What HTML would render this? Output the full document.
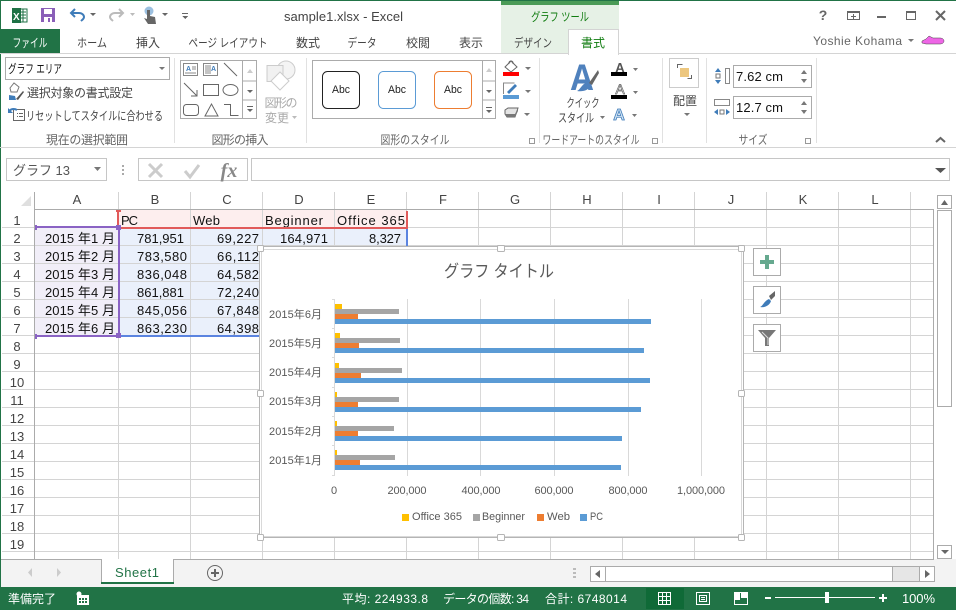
<!DOCTYPE html>
<html lang="ja"><head><meta charset="utf-8"><title>sample1.xlsx - Excel</title>
<style>
html,body{margin:0;padding:0;background:#fff;width:956px;height:610px;overflow:hidden}
svg{display:block;position:absolute;left:0;top:0}
text{font-family:"Liberation Sans","Noto Sans CJK JP",sans-serif;fill:#444}
.c{shape-rendering:crispEdges}
.m{text-anchor:middle}
.r{font-size:12px}
.g{font-size:12px;fill:#666}
.cell{font-size:13px;fill:#111}
.h{font-size:13px;fill:#444}
.a{font-size:11px;fill:#595959}
.s{font-size:12px;fill:#fff}
</style></head><body>
<svg width="956" height="610" viewBox="0 0 956 610">
<rect class="c" width="956" height="610" fill="#fff"/>
<!-- window edges -->
<rect class="c" width="956" height="1" fill="#217346"/>
<rect class="c" x="0" width="1" height="610" fill="#217346"/>

<!-- QAT -->
<rect class="c" x="18" y="9" width="9" height="13" fill="#fff" stroke="#1e7145"/>
<path class="c" d="M20 12h6M20 15h6M20 18h6M23 9v13" stroke="#1e7145" fill="none"/>
<rect class="c" x="12" y="8" width="9" height="15" fill="#1e7145"/>
<text x="13" y="20" style="font-size:10px;font-weight:bold;fill:#fff">X</text>
<rect class="c" x="41" y="8" width="14" height="14" fill="#8a5fb8"/>
<rect class="c" x="44" y="9" width="8" height="5" fill="#fff"/>
<rect class="c" x="44" y="17" width="8" height="5" fill="#fff"/>
<rect class="c" x="48" y="18" width="2" height="4" fill="#8a5fb8"/>
<path d="M75 9l-4 4 4 4M71 13h8c3 0 5 2 5 4s-2 3-3 4" fill="none" stroke="#3f7cb9" stroke-width="2"/>
<path d="M90 13h6l-3 3z" fill="#666"/>
<path d="M119 9l4 4-4 4M123 13h-8c-3 0-5 2-5 4s2 3 3 4" fill="none" stroke="#bbb" stroke-width="2"/>
<path d="M130 13h5l-2.500 3z" fill="#bbb"/>
<circle cx="149" cy="11" r="4.500" fill="#9cc0e0"/>
<path d="M147 10h3v6l5 1 1 7h-8l-4-6 3 1z" fill="#666"/>
<path d="M162 13h6l-3 3z" fill="#666"/>
<path class="c" d="M182 13h6v1h-6zM182 16h6l-3 3z" fill="#666"/>

<text x="343.500" y="21" class="m" style="font-size:13px;fill:#444" textLength="119">sample1.xlsx - Excel</text>

<!-- window buttons -->
<text x="823" y="20" class="m" style="font-size:14px;font-weight:bold;fill:#666">?</text>
<rect class="c" x="847.500" y="11.500" width="12" height="8" fill="#fff" stroke="#666"/>
<path class="c" d="M847 11h13v2h-13zM853 14h1v5h-1zM851 16h5v1h-5z" fill="#666"/>
<rect class="c" x="877" y="16" width="9" height="2" fill="#666"/>
<rect class="c" x="906.500" y="11.500" width="9" height="8" fill="#fff" stroke="#666"/>
<rect class="c" x="906" y="11" width="10" height="2" fill="#666"/>
<path d="M936 11l9 9M945 11l-9 9" stroke="#666" stroke-width="2"/>

<!-- contextual tab -->
<rect class="c" x="501" y="1" width="118" height="52" fill="#e6f1e6"/>
<rect class="c" x="501" y="1" width="118" height="4" fill="#4b9b57"/>
<text x="560" y="21" class="m" style="font-size:12px;fill:#107c10" textLength="58" lengthAdjust="spacingAndGlyphs">グラフ ツール</text>

<!-- tabs -->
<rect class="c" x="1" y="29" width="59" height="25" fill="#217346"/>
<rect class="c" x="0" y="53" width="956" height="1" fill="#d4d4d4"/>
<rect class="c" x="568.500" y="29.500" width="50" height="25" fill="#fff" stroke="#d4d4d4"/>
<rect class="c" x="569" y="53" width="49" height="2" fill="#fff"/>
<text x="30" y="47" class="m" style="font-size:12px;fill:#fff" textLength="35" lengthAdjust="spacingAndGlyphs">ファイル</text>
<text x="92" y="47" class="m r" textLength="30" lengthAdjust="spacingAndGlyphs">ホーム</text>
<text x="148" y="47" class="m r" textLength="24">挿入</text>
<text x="228" y="47" class="m r" textLength="79" lengthAdjust="spacingAndGlyphs">ページ レイアウト</text>
<text x="308" y="47" class="m r" textLength="24">数式</text>
<text x="362" y="47" class="m r" textLength="29" lengthAdjust="spacingAndGlyphs">データ</text>
<text x="418" y="47" class="m r" textLength="24">校閲</text>
<text x="471" y="47" class="m r" textLength="24">表示</text>
<text x="533" y="47" class="m r" textLength="38" lengthAdjust="spacingAndGlyphs">デザイン</text>
<text x="593" y="47" class="m" style="font-size:12px;fill:#107c10" textLength="24">書式</text>

<text x="813" y="45" style="font-size:12px;fill:#666" textLength="89">Yoshie Kohama</text>
<path d="M908 39h6l-3 3z" fill="#777"/>
<path d="M922 41l4-2 3-3 4 2h7c3 0 4 2 4 3s-1 3-4 3h-14l-4-1z" fill="#ee66e6" stroke="#444" stroke-width=".5"/>

<!-- ribbon bottom -->
<rect class="c" x="0" y="147" width="956" height="1" fill="#d4d4d4"/>
<!-- separators -->
<path class="c" d="M174.500 58v85M306.500 58v85M539.500 58v85M662.500 58v85M706.500 58v85M816.500 58v85" stroke="#e1e1e1"/>

<!-- Group 1 -->
<rect class="c" x="5.500" y="57.500" width="164" height="22" fill="#fff" stroke="#ababab"/>
<text x="8" y="73" style="font-size:12px;fill:#111" textLength="54" lengthAdjust="spacingAndGlyphs">グラフ エリア</text>
<path d="M159 67h6l-3 3z" fill="#777"/>
<path d="M10 88l4-5 5 4-2 5h-6z" fill="#fff" stroke="#777"/>
<path d="M16 99l7-8 1 1-6 8z" fill="#555"/>
<path d="M9 95l6 1 1 4-7 0z" fill="#3f7cb9"/>
<text x="27" y="97" class="r" textLength="106">選択対象の書式設定</text>
<rect class="c" x="13.500" y="109.500" width="11" height="11" fill="#fff" stroke="#666"/>
<path class="c" d="M17 113h1v1h-1zM19 113h4v1h-4zM17 116h1v1h-1zM19 116h4v1h-4z" fill="#666"/>
<path d="M9 112c1-3 5-4 8-2" fill="none" stroke="#3f7cb9" stroke-width="2"/>
<path d="M8 108v5h5z" fill="#3f7cb9"/>
<text x="26" y="120" class="r" textLength="137" lengthAdjust="spacingAndGlyphs">リセットしてスタイルに合わせる</text>
<text x="87" y="144" class="g m" textLength="82">現在の選択範囲</text>

<!-- Shapes gallery -->
<rect class="c" x="180.500" y="60.500" width="76" height="58" fill="#fff" stroke="#ababab"/>
<path class="c" d="M242.500 61v57M243 81h14M243 100h14" stroke="#ababab" fill="none"/>
<rect class="c" x="183.500" y="63.500" width="14" height="12" fill="#fff" stroke="#888"/>
<text x="186" y="71" style="font-size:7px;fill:#3f7cb9;font-weight:bold">A</text>
<path class="c" d="M185 73h11M192 67h4M192 69h4" stroke="#888"/>
<rect class="c" x="203.500" y="63.500" width="14" height="12" fill="#fff" stroke="#888"/>
<path class="c" d="M206 65v9M208 65v9M210 65v9" stroke="#888"/>
<text x="211" y="71" style="font-size:7px;fill:#3f7cb9;font-weight:bold">A</text>
<path d="M224 63l13 13" stroke="#666" fill="none"/>
<path d="M184 83l13 13M197 90v6h-6" stroke="#666" fill="none"/>
<rect class="c" x="203.500" y="84.500" width="15" height="11" fill="#fff" stroke="#666"/>
<ellipse cx="230.500" cy="90" rx="7.500" ry="5.500" fill="#fff" stroke="#666"/>
<rect x="183.500" y="104.500" width="15" height="11" rx="3" fill="#fff" stroke="#666"/>
<path d="M205 116l6.500-12 6.500 12z" fill="#fff" stroke="#666"/>
<path class="c" d="M224 104.500h6.500v11h8" fill="none" stroke="#666"/>
<path d="M247 73h6l-3-4z" fill="#ccc"/>
<path d="M247 90h6l-3 3z" fill="#666"/>
<path class="c" d="M247 106h6v1h-6z" fill="#666"/>
<path d="M247 109h6l-3 3z" fill="#666"/>
<circle cx="286" cy="70" r="9" fill="#f4f4f4" stroke="#ccc"/>
<rect class="c" x="267" y="65.500" width="16" height="16" fill="#f1f1f1" stroke="#ccc"/>
<path d="M280 72l9 9-9 9-9-9z" fill="#fff" stroke="#ccc"/>
<text x="281" y="107" class="m" style="font-size:12px;fill:#aaa" textLength="33">図形の</text>
<text x="277" y="122" class="m" style="font-size:12px;fill:#aaa" textLength="24">変更</text>
<path d="M292 116h5l-2.500 3z" fill="#bbb"/>
<text x="240" y="144" class="g m" textLength="57">図形の挿入</text>

<!-- Shape styles -->
<rect class="c" x="312.500" y="60.500" width="183" height="58" fill="#fff" stroke="#ababab"/>
<path class="c" d="M482.500 61v57M482 81h14M482 100h14" stroke="#ababab" fill="none"/>
<rect x="322.500" y="71.500" width="37" height="37" rx="5" fill="#fff" stroke="#222"/>
<rect x="378.500" y="71.500" width="37" height="37" rx="5" fill="#fff" stroke="#5b9bd5"/>
<rect x="434.500" y="71.500" width="37" height="37" rx="5" fill="#fff" stroke="#ed7d31"/>
<text x="341" y="93" class="m" style="font-size:11px;fill:#222" textLength="18" lengthAdjust="spacingAndGlyphs">Abc</text>
<text x="397" y="93" class="m" style="font-size:11px;fill:#222" textLength="18" lengthAdjust="spacingAndGlyphs">Abc</text>
<text x="453" y="93" class="m" style="font-size:11px;fill:#222" textLength="18" lengthAdjust="spacingAndGlyphs">Abc</text>
<path d="M486 72h6l-3-4z" fill="#ccc"/>
<path d="M486 90h6l-3 3z" fill="#666"/>
<path class="c" d="M486 107h6v1h-6z" fill="#666"/>
<path d="M486 110h6l-3 3z" fill="#666"/>
<text x="415" y="144" class="g m" textLength="69" lengthAdjust="spacingAndGlyphs">図形のスタイル</text>
<path class="c" d="M529.500 138.500h5v5h-5z" fill="none" stroke="#999"/>

<!-- fill/outline/effect -->
<path d="M511 61l6 6-6 5-6-5z" fill="#fff" stroke="#666"/>
<path d="M509 64c-1-4 5-4 4 0" fill="none" stroke="#666"/>
<rect class="c" x="503" y="72" width="16" height="4" fill="#f00"/>
<path d="M525 67h6l-3 3z" fill="#777"/>
<path class="c" d="M503.500 94v-11h11" fill="none" stroke="#888"/>
<path d="M507 92l8-8 2 2-8 8z" fill="#3f7cb9"/>
<rect class="c" x="503" y="95" width="16" height="4" fill="#5b9bd5"/>
<path d="M525 90h6l-3 3z" fill="#777"/>
<path d="M505 110l3-2h10l-3 9h-8l-2-3z" fill="#e4e4e4" stroke="#666"/>
<path d="M505 114h10l3-6v3l-3 6h-8z" fill="#777"/>
<path d="M524 113h6l-3 3z" fill="#777"/>

<!-- wordart -->
<text x="582" y="90" class="m" style="font-size:37px;font-weight:bold;fill:#4f81bd" textLength="24" lengthAdjust="spacingAndGlyphs">A</text>
<path d="M589 83l9-13 1 3-7 12z" fill="#666"/>
<path d="M586 83l4 3c-1 4-7 6-13 5 3-1 5-7 9-8z" fill="#4f81bd"/>
<text x="583" y="107" class="m r" textLength="33" lengthAdjust="spacingAndGlyphs">クイック</text>
<text x="576" y="122" class="m r" textLength="36" lengthAdjust="spacingAndGlyphs">スタイル</text>
<path d="M600 116h5l-2.500 3z" fill="#777"/>
<text x="620" y="72" class="m" style="font-size:13px;font-weight:bold;fill:#555">A</text>
<rect class="c" x="611" y="72" width="16" height="4" fill="#000"/>
<path d="M633 68h5l-2.500 3z" fill="#777"/>
<text x="620" y="94" class="m" style="font-size:14px;fill:#fff;stroke:#666;stroke-width:.7">A</text>
<rect class="c" x="611" y="95" width="16" height="4" fill="#000"/>
<path d="M633 91h5l-2.500 3z" fill="#777"/>
<text x="619" y="120" class="m" style="font-size:16px;font-weight:bold;fill:#cfe2f3;stroke:#3f7cb9;stroke-width:.8">A</text>
<path d="M632 114h5l-2.500 3z" fill="#777"/>
<text x="591" y="144" class="g m" textLength="97" lengthAdjust="spacingAndGlyphs">ワードアートのスタイル</text>
<path class="c" d="M652.500 138.500h5v5h-5z" fill="none" stroke="#999"/>

<!-- arrange -->
<rect class="c" x="669.500" y="58.500" width="29" height="29" fill="#fff" stroke="#ccc"/>
<rect class="c" x="680" y="68" width="9" height="9" fill="#edc77f"/>
<path class="c" d="M677.500 68v-3.500h5M691.500 75v3.500h-4" fill="none" stroke="#666"/>
<text x="685" y="105" class="m r" textLength="24">配置</text>
<path d="M684 113h6l-3 3z" fill="#777"/>

<!-- size -->
<rect class="c" x="725.500" y="68.500" width="4" height="15" fill="#fff" stroke="#888"/>
<path d="M715 72l3-4 3 4zM715 80l3 4 3-4z" fill="#3f7cb9"/>
<rect class="c" x="716" y="74" width="4" height="4" fill="#fff" stroke="#777"/>
<rect class="c" x="733.500" y="65.500" width="78" height="22" fill="#fff" stroke="#ababab"/>
<text x="736" y="81" style="font-size:13px;fill:#111" textLength="47">7.62 cm</text>
<path d="M801 74h6l-3-4zM801 79h6l-3 4z" fill="#777"/>
<rect class="c" x="714.500" y="99.500" width="15" height="6" fill="#fff" stroke="#888"/>
<path d="M718 109l-4 3 4 3zM726 109l4 3-4 3z" fill="#3f7cb9"/>
<rect class="c" x="720" y="110" width="4" height="4" fill="#fff" stroke="#777"/>
<rect class="c" x="733.500" y="96.500" width="78" height="22" fill="#fff" stroke="#ababab"/>
<text x="736" y="112" style="font-size:13px;fill:#111" textLength="47">12.7 cm</text>
<path d="M801 105h6l-3-4zM801 110h6l-3 4z" fill="#777"/>
<text x="753" y="144" class="g m" textLength="29" lengthAdjust="spacingAndGlyphs">サイズ</text>
<path class="c" d="M805.500 138.500h5v5h-5z" fill="none" stroke="#999"/>
<path d="M936 142l4.500-4 4.500 4" fill="none" stroke="#666" stroke-width="2"/>

<!-- formula bar -->
<rect class="c" x="6.500" y="158.500" width="100" height="22" fill="#fff" stroke="#c6c6c6"/>
<text x="13" y="175" style="font-size:13px;fill:#555" textLength="57">グラフ 13</text>
<path d="M94 167h7l-3.500 4z" fill="#777"/>
<path class="c" d="M122 165h2v2h-2zM122 169h2v2h-2zM122 173h2v2h-2z" fill="#aaa"/>
<rect class="c" x="138.500" y="158.500" width="109" height="22" fill="#fff" stroke="#c6c6c6"/>
<path d="M149 164l13 13M162 164l-13 13" stroke="#ccc" stroke-width="3"/>
<path d="M185 171l5 6 9-12" stroke="#ccc" stroke-width="3" fill="none"/>
<text x="229" y="177" class="m" style="font-family:'Liberation Serif',serif;font-size:20px;font-style:italic;font-weight:bold;fill:#888">fx</text>
<rect class="c" x="251.500" y="158.500" width="698" height="22" fill="#fff" stroke="#c6c6c6"/>
<path d="M935 168h11l-5.500 5z" fill="#555"/>

<!-- sheet area background -->
<path d="M31 196v10h-10z" fill="#dfdfdf"/>
<!-- cell fills -->
<rect class="c" x="119" y="210" width="288" height="18" fill="#fdeeee"/>
<rect class="c" x="35" y="228" width="83" height="108" fill="#f1eef8"/>
<rect class="c" x="119" y="228" width="288" height="18" fill="#eaf0fb"/>
<rect class="c" x="119" y="246" width="142" height="90" fill="#eaf0fb"/>
<!-- grid -->
<path class="c" stroke="#d4d4d4" fill="none" d="M118.500 192V559M190.500 192V559M262.500 192V559M334.500 192V559M406.500 192V559M478.500 192V559M550.500 192V559M622.500 192V559M694.500 192V559M766.500 192V559M838.500 192V559M910.500 192V559M2 227.500H933M2 245.500H933M2 263.500H933M2 281.500H933M2 299.500H933M2 317.500H933M2 335.500H933M2 353.500H933M2 371.500H933M2 389.500H933M2 407.500H933M2 425.500H933M2 443.500H933M2 461.500H933M2 479.500H933M2 497.500H933M2 515.500H933M2 533.500H933M2 551.500H933"/>
<path class="c" d="M34.500 192V559M34 209.500H933.500V559" stroke="#ababab" fill="none"/>
<!-- headers -->
<g class="h">
<text x="77" y="204" class="m h">A</text><text x="155" y="204" class="m h">B</text><text x="227" y="204" class="m h">C</text><text x="299" y="204" class="m h">D</text><text x="371" y="204" class="m h">E</text><text x="443" y="204" class="m h">F</text><text x="515" y="204" class="m h">G</text><text x="587" y="204" class="m h">H</text><text x="659" y="204" class="m h">I</text><text x="731" y="204" class="m h">J</text><text x="803" y="204" class="m h">K</text><text x="875" y="204" class="m h">L</text>
<text x="17" y="225" class="m h">1</text><text x="17" y="243" class="m h">2</text><text x="17" y="261" class="m h">3</text><text x="17" y="279" class="m h">4</text><text x="17" y="297" class="m h">5</text><text x="17" y="315" class="m h">6</text><text x="17" y="333" class="m h">7</text><text x="17" y="351" class="m h">8</text><text x="17" y="369" class="m h">9</text><text x="17" y="387" class="m h">10</text><text x="17" y="405" class="m h">11</text><text x="17" y="423" class="m h">12</text><text x="17" y="441" class="m h">13</text><text x="17" y="459" class="m h">14</text><text x="17" y="477" class="m h">15</text><text x="17" y="495" class="m h">16</text><text x="17" y="513" class="m h">17</text><text x="17" y="531" class="m h">18</text><text x="17" y="549" class="m h">19</text>
</g>
<!-- cells -->
<text x="121" y="225" class="cell" textLength="17">PC</text>
<text x="193" y="225" class="cell" textLength="27">Web</text>
<text x="265" y="225" class="cell" textLength="58">Beginner</text>
<text x="337" y="225" class="cell" textLength="68">Office 365</text>
<text x="45" y="243" class="cell" textLength="70">2015 年1 月</text>
<text x="45" y="261" class="cell" textLength="70">2015 年2 月</text>
<text x="45" y="279" class="cell" textLength="70">2015 年3 月</text>
<text x="45" y="297" class="cell" textLength="70">2015 年4 月</text>
<text x="45" y="315" class="cell" textLength="70">2015 年5 月</text>
<text x="45" y="333" class="cell" textLength="70">2015 年6 月</text>
<text x="137" y="243" class="cell" textLength="47">781,951</text>
<text x="137" y="261" class="cell" textLength="50">783,580</text>
<text x="137" y="279" class="cell" textLength="50">836,048</text>
<text x="137" y="297" class="cell" textLength="47">861,881</text>
<text x="137" y="315" class="cell" textLength="50">845,056</text>
<text x="137" y="333" class="cell" textLength="50">863,230</text>
<text x="217" y="243" class="cell" textLength="42">69,227</text>
<text x="217" y="261" class="cell" textLength="42">66,112</text>
<text x="217" y="279" class="cell" textLength="42">64,582</text>
<text x="217" y="297" class="cell" textLength="42">72,240</text>
<text x="217" y="315" class="cell" textLength="42">67,848</text>
<text x="217" y="333" class="cell" textLength="42">64,398</text>
<text x="280" y="243" class="cell" textLength="48">164,971</text>
<text x="369" y="243" class="cell" textLength="32">8,327</text>
<!-- selection -->
<rect class="c" x="120" y="227" width="288" height="2" fill="#e15a5a"/>
<rect class="c" x="117" y="211" width="2" height="14" fill="#e15a5a"/>
<rect class="c" x="406" y="211" width="2" height="17" fill="#e15a5a"/>
<rect class="c" x="116" y="210" width="5" height="2" fill="#e15a5a"/>
<rect class="c" x="406" y="229" width="2" height="17" fill="#5b84e0"/>
<rect class="c" x="120" y="335" width="140" height="2" fill="#5b84e0"/>
<rect class="c" x="35" y="226" width="84" height="2" fill="#8a63c4"/>
<rect class="c" x="35" y="335" width="84" height="2" fill="#8a63c4"/>
<rect class="c" x="118" y="226" width="2" height="110" fill="#8a63c4"/>
<rect class="c" x="35" y="225" width="2" height="5" fill="#8a63c4"/>
<rect class="c" x="35" y="334" width="2" height="5" fill="#8a63c4"/>
<rect class="c" x="116" y="225" width="5" height="5" fill="#8a63c4"/>
<rect class="c" x="116" y="333" width="5" height="5" fill="#8a63c4"/>

<!-- chart -->
<rect class="c" x="259.500" y="246.500" width="484" height="291" fill="#fff" stroke="#b5b5b5"/>
<rect class="c" x="261.500" y="249.500" width="480" height="287" fill="#fff" stroke="#d9d9d9"/>
<text x="499" y="277" class="m" style="font-size:17px;fill:#595959" textLength="110" lengthAdjust="spacingAndGlyphs">グラフ タイトル</text>
<path class="c" stroke="#d9d9d9" fill="none" d="M334.500 299V476M407.500 299V476M480.500 299V476M554.500 299V476M628.500 299V476M701.500 299V476M332 299.500h2M332 328.500h2M332 357.500h2M332 387.500h2M332 416.500h2M332 445.500h2M332 475.500h2"/>
<g class="c">
<rect x="335" y="304" width="7" height="5" fill="#ffc000"/><rect x="335" y="309" width="64" height="5" fill="#a5a5a5"/><rect x="335" y="314" width="23" height="5" fill="#ed7d31"/><rect x="335" y="319" width="316" height="5" fill="#5b9bd5"/>
<rect x="335" y="333" width="5" height="5" fill="#ffc000"/><rect x="335" y="338" width="65" height="5" fill="#a5a5a5"/><rect x="335" y="343" width="24" height="5" fill="#ed7d31"/><rect x="335" y="348" width="309" height="5" fill="#5b9bd5"/>
<rect x="335" y="363" width="4" height="5" fill="#ffc000"/><rect x="335" y="368" width="67" height="5" fill="#a5a5a5"/><rect x="335" y="373" width="26" height="5" fill="#ed7d31"/><rect x="335" y="378" width="315" height="5" fill="#5b9bd5"/>
<rect x="335" y="392" width="2" height="5" fill="#ffc000"/><rect x="335" y="397" width="64" height="5" fill="#a5a5a5"/><rect x="335" y="402" width="23" height="5" fill="#ed7d31"/><rect x="335" y="407" width="306" height="5" fill="#5b9bd5"/>
<rect x="335" y="421" width="2" height="5" fill="#ffc000"/><rect x="335" y="426" width="59" height="5" fill="#a5a5a5"/><rect x="335" y="431" width="23" height="5" fill="#ed7d31"/><rect x="335" y="436" width="287" height="5" fill="#5b9bd5"/>
<rect x="335" y="450" width="2" height="5" fill="#ffc000"/><rect x="335" y="455" width="60" height="5" fill="#a5a5a5"/><rect x="335" y="460" width="25" height="5" fill="#ed7d31"/><rect x="335" y="465" width="286" height="5" fill="#5b9bd5"/>
</g>
<text x="269" y="318" class="a" textLength="53">2015年6月</text>
<text x="269" y="347" class="a" textLength="53">2015年5月</text>
<text x="269" y="376" class="a" textLength="53">2015年4月</text>
<text x="269" y="405" class="a" textLength="53">2015年3月</text>
<text x="269" y="435" class="a" textLength="53">2015年2月</text>
<text x="269" y="464" class="a" textLength="53">2015年1月</text>
<text x="334" y="494" class="a m">0</text>
<text x="407" y="494" class="a m" textLength="39">200,000</text>
<text x="481" y="494" class="a m" textLength="39">400,000</text>
<text x="554" y="494" class="a m" textLength="39">600,000</text>
<text x="628" y="494" class="a m" textLength="39">800,000</text>
<text x="701" y="494" class="a m" textLength="48">1,000,000</text>
<rect class="c" x="402" y="514" width="7" height="7" fill="#ffc000"/>
<text x="412" y="520" class="a" textLength="50" lengthAdjust="spacingAndGlyphs">Office 365</text>
<rect class="c" x="473" y="514" width="7" height="7" fill="#a5a5a5"/>
<text x="482" y="520" class="a" textLength="43" lengthAdjust="spacingAndGlyphs">Beginner</text>
<rect class="c" x="537" y="514" width="7" height="7" fill="#ed7d31"/>
<text x="547" y="520" class="a" textLength="23" lengthAdjust="spacingAndGlyphs">Web</text>
<rect class="c" x="580" y="514" width="7" height="7" fill="#5b9bd5"/>
<text x="590" y="520" class="a" textLength="13" lengthAdjust="spacingAndGlyphs">PC</text>
<!-- handles -->
<g fill="#fff" stroke="#b5b5b5">
<rect x="257.500" y="245.500" width="6" height="6" rx="1"/><rect x="497.500" y="245.500" width="7" height="6" rx="1"/><rect x="738.500" y="245.500" width="6" height="6" rx="1"/>
<rect x="257.500" y="390.500" width="6" height="6" rx="1"/><rect x="738.500" y="390.500" width="6" height="6" rx="1"/>
<rect x="257.500" y="534.500" width="6" height="6" rx="1"/><rect x="497.500" y="534.500" width="7" height="6" rx="1"/><rect x="738.500" y="534.500" width="6" height="6" rx="1"/>
</g>
<!-- chart buttons -->
<g class="c" fill="#fff" stroke="#ababab">
<rect x="753.500" y="248.500" width="27" height="27"/><rect x="753.500" y="286.500" width="27" height="27"/><rect x="753.500" y="324.500" width="27" height="27"/>
</g>
<path class="c" d="M765 255h4v5h5v4h-5v5h-4v-5h-5v-4h5z" fill="#66a98f"/>
<path d="M769 296l6-5v5l-4 4z" fill="#666"/>
<path d="M769 299l2 2c-1 4-6 7-11 6 3-1 4-6 9-8z" fill="#3f7cb9"/>
<path d="M758 330h18l-7 8v8h-4v-8z" fill="#777"/>
<path d="M762 332l6 6v7" fill="none" stroke="#ddd"/>

<!-- vertical scrollbar -->
<rect class="c" x="934" y="190" width="22" height="370" fill="#fff"/>
<rect class="c" x="937.500" y="195.500" width="14" height="13" fill="#fff" stroke="#ababab"/>
<path d="M941 205h7l-3.500-5z" fill="#666"/>
<rect class="c" x="937.500" y="210.500" width="14" height="196" fill="#fff" stroke="#ababab"/>
<rect class="c" x="937.500" y="545.500" width="14" height="13" fill="#fff" stroke="#ababab"/>
<path d="M941 550h8l-4 4z" fill="#666"/>

<!-- sheet tabs bar -->
<rect class="c" x="1" y="559" width="955" height="28" fill="#f3f3f3"/>
<rect class="c" x="1" y="559" width="933" height="1" fill="#ababab"/>
<rect class="c" x="101.500" y="559.500" width="72" height="24" fill="#fff" stroke="#ababab"/>
<rect class="c" x="102" y="559" width="71" height="1" fill="#fff"/>
<rect class="c" x="101" y="582" width="73" height="2" fill="#217346"/>
<text x="137" y="577" class="m" style="font-size:13px;fill:#217346" textLength="44">Sheet1</text>
<path d="M32 568l-4 4.500 4 4.500z" fill="#ccc"/><path d="M57 568l4 4.500-4 4.500z" fill="#ccc"/>
<circle cx="215" cy="573" r="7.500" fill="none" stroke="#666"/>
<path class="c" d="M214 569h2v3h3v2h-3v3h-2v-3h-3v-2h3z" fill="#666"/>
<path class="c" d="M573 568h3v2h-3zM573 572h3v2h-3zM573 576h3v2h-3z" fill="#bbb"/>
<!-- hscroll -->
<rect class="c" x="590.500" y="566.500" width="344" height="15" fill="#e6e6e6" stroke="#ababab"/>
<rect class="c" x="591" y="567" width="14" height="14" fill="#fff"/>
<rect class="c" x="605.500" y="566.500" width="287" height="15" fill="#fff" stroke="#ababab"/>
<rect class="c" x="919.500" y="566.500" width="15" height="15" fill="#fff" stroke="#ababab"/>
<path d="M600 570v8l-5-4z" fill="#666"/><path d="M925 570v8l5-4z" fill="#666"/>

<!-- status bar -->
<rect class="c" x="0" y="587" width="956" height="23" fill="#217346"/>
<text x="8" y="603" class="s" textLength="48">準備完了</text>
<path class="c" d="M77 595h12v10h-12z" fill="#fff"/>
<path class="c" d="M79 598h2v2h-2zM82 598h2v2h-2zM85 598h2v2h-2zM79 601h2v2h-2zM82 601h2v2h-2zM85 601h2v2h-2z" fill="#217346"/>
<circle cx="79" cy="594" r="2.500" fill="#fff"/>
<text x="342" y="603" class="s" textLength="86">平均: 224933.8</text>
<text x="443" y="603" class="s" textLength="86">データの個数: 34</text>
<text x="545" y="603" class="s" textLength="82">合計: 6748014</text>
<rect class="c" x="646" y="588" width="38" height="21" fill="#0f6a37"/>
<path class="c" d="M658.500 592.500h12v12h-12zM662.500 592.500v12M666.500 592.500v12M658.500 596.500h12M658.500 600.500h12" fill="none" stroke="#fff"/>
<path class="c" d="M696.500 592.500h13v12h-13zM699.500 595.500h7v6h-7zM701 597.500h4M701 599.500h4" fill="none" stroke="#fff"/>
<path class="c" d="M734.500 592.500h13v12h-13z" fill="none" stroke="#fff"/>
<path class="c" d="M735 592h5v8h-5zM741 592h6v6h-6z" fill="#fff"/>
<rect class="c" x="765" y="597" width="6" height="2" fill="#fff"/>
<rect class="c" x="775" y="597" width="100" height="1" fill="#fff"/>
<rect class="c" x="825" y="592" width="4" height="11" fill="#fff"/>
<path class="c" d="M882 594h2v3h3v2h-3v3h-2v-3h-3v-2h3z" fill="#fff"/>
<text x="902" y="603" class="s" style="font-size:13px" textLength="33">100%</text>
</svg>
</body></html>
